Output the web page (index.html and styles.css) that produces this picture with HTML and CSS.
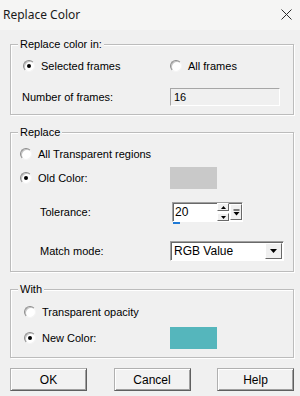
FILE: index.html
```html
<!DOCTYPE html>
<html lang="en">
<head>
    <meta charset="UTF-8">
    <meta name="viewport" content="width=device-width, initial-scale=1.0">
    <title>Replace Color</title>
    <link rel="stylesheet" href="styles.css">
</head>
<body>
    <div class="window">
        <div class="titlebar">
            <span class="title">Replace Color</span>
            <svg class="close" width="11" height="11" viewBox="0 0 11 11">
                <path d="M0.5 0.5 L10.5 10.5 M10.5 0.5 L0.5 10.5" stroke="#2b2b2b" stroke-width="1" fill="none"/>
            </svg>
        </div>

        <div class="dialog">
            <fieldset class="group group-in">
                <legend>Replace color in:</legend>
                <div class="row row-first">
                    <label class="option opt-selected"><span class="radio checked"></span>Selected frames</label>
                    <label class="option opt-all"><span class="radio"></span>All frames</label>
                </div>
                <div class="row row-count">
                    <span class="field-label label-count">Number of frames:</span>
                    <span class="readonly-box">16</span>
                </div>
            </fieldset>

            <fieldset class="group group-replace">
                <legend>Replace</legend>
                <div class="row row-first">
                    <label class="option opt-transparent"><span class="radio"></span>All Transparent regions</label>
                </div>
                <div class="row row-swatch">
                    <label class="option opt-old"><span class="radio checked"></span>Old Color:</label>
                    <span class="swatch swatch-old"></span>
                </div>
                <div class="row row-tolerance">
                    <span class="field-label label-sub">Tolerance:</span>
                    <div class="spin">
                        <span class="spin-value">20</span>
                        <div class="spin-arrows">
                            <span class="spin-btn"><svg width="5" height="3" viewBox="0 0 5 3"><path d="M2.5 0 L5 3 L0 3 Z" fill="#000"/></svg></span>
                            <span class="spin-btn"><svg width="5" height="3" viewBox="0 0 5 3"><path d="M0 0 L5 0 L2.5 3 Z" fill="#000"/></svg></span>
                        </div>
                        <span class="spin-drop"><svg width="7" height="7" viewBox="0 0 7 7"><path d="M0.5 1 H6.5" stroke="#000" stroke-width="1"/><path d="M0.5 3 L6.5 3 L3.5 6.5 Z" fill="#000"/></svg></span>
                        <span class="spin-mark"></span>
                    </div>
                </div>
                <div class="row row-match">
                    <span class="field-label label-sub">Match mode:</span>
                    <div class="combo">
                        <span class="combo-value">RGB Value</span>
                        <span class="combo-btn"><svg width="7" height="4" viewBox="0 0 7 4"><path d="M0 0 L7 0 L3.5 4 Z" fill="#000"/></svg></span>
                    </div>
                </div>
            </fieldset>

            <fieldset class="group group-with">
                <legend>With</legend>
                <div class="row row-first">
                    <label class="option opt-opacity"><span class="radio"></span>Transparent opacity</label>
                </div>
                <div class="row row-swatch">
                    <label class="option opt-new"><span class="radio checked"></span>New Color:</label>
                    <span class="swatch swatch-new"></span>
                </div>
            </fieldset>

            <div class="buttons">
                <button class="btn">OK</button>
                <button class="btn">Cancel</button>
                <button class="btn">Help</button>
            </div>
        </div>
    </div>
</body>
</html>
```

FILE: styles.css
```css
* {
    box-sizing: border-box;
}
body {
    margin: 0;
    background: #f0f0f0;
    font-family: 'Liberation Sans', Arial, sans-serif;
    font-size: 11px;
    color: #000;
}
.window {
    width: 300px;
    height: 396px;
    overflow: hidden;
}
.titlebar {
    height: 30px;
    background: #f5f5f4;
    display: flex;
    align-items: center;
    justify-content: space-between;
    padding: 0 8px 2px 3px;
    font-family: 'Noto Sans', sans-serif;
    font-size: 12px;
    color: #1a1a1a;
}
.dialog {
    padding: 7px 0 0 10px;
}
.group {
    width: 284px;
    margin: 0;
    padding: 0 0 7px;
    border: 1px solid #bcbcbc;
    box-shadow: inset 1px 1px 0 #fff, 1px 1px 0 #fff;
}
.group legend {
    margin-left: 7px;
    padding: 0 2px;
    line-height: 14px;
    background: #f0f0f0;
}
.group-replace,
.group-with {
    margin-top: 10px;
}
.group-replace {
    padding-bottom: 10px;
}
.group-with {
    padding-bottom: 8px;
}
.row {
    display: flex;
    align-items: center;
    height: 20px;
}
.row-first {
    margin-top: 5px;
}
.group-with .row-first {
    margin-top: 6px;
}
.row-count {
    margin-top: 11px;
    padding-left: 11px;
}
.row-swatch {
    height: 22px;
    margin-top: 3px;
}
.group-with .row-swatch {
    margin-top: 5px;
}
.row-tolerance {
    margin-top: 13px;
}
.row-match {
    margin-top: 19px;
}

/* radio options */
.option {
    display: flex;
    align-items: center;
}
.radio {
    position: relative;
    width: 12px;
    height: 12px;
    margin-right: 6px;
    border-radius: 50%;
    background: #fff;
    border: 1px solid;
    border-color: #8c8c8c #f4f4f4 #f4f4f4 #8c8c8c;
    box-shadow: inset 1px 1px 0 #c4c4c4;
}
.radio.checked::after {
    content: '';
    position: absolute;
    left: 3px;
    top: 3px;
    width: 4px;
    height: 4px;
    border-radius: 50%;
    background: #000;
}
.opt-selected {
    margin-left: 12px;
    width: 147px;
}
.group-replace .option {
    margin-left: 9px;
}
.opt-old {
    width: 150px;
}
.group-with .option {
    margin-left: 13px;
}
.opt-new {
    width: 146px;
}

/* labels and fields */
.label-count {
    width: 148px;
}
.label-sub {
    width: 132px;
    margin-left: 29px;
}
.row-match .label-sub {
    width: 130px;
}
.readonly-box {
    width: 110px;
    height: 18px;
    padding: 2px 3px;
    line-height: 13px;
    border: 1px solid;
    border-color: #a6a6a6 #fff #fff #a6a6a6;
    background: #f0f0f0;
}
.swatch {
    width: 47px;
    height: 22px;
}
.swatch-old {
    background: #c9c9c9;
}
.swatch-new {
    background: #55b6bc;
}

/* spin control */
.spin {
    position: relative;
    display: flex;
    align-items: center;
    width: 71px;
    height: 20px;
    background: #fff;
    border: 1px solid;
    border-color: #a0a0a0 #fff #fff #a0a0a0;
    box-shadow: inset 1px 1px 0 #696969;
}
.spin-value {
    flex: 1;
    padding-left: 2px;
    font-size: 12px;
}
.spin-arrows {
    display: flex;
    flex-direction: column;
    gap: 2px;
    margin-right: 1px;
}
.spin-btn,
.spin-drop,
.combo-btn {
    display: flex;
    align-items: center;
    justify-content: center;
    background: #f0f0f0;
    border: 1px solid;
    border-color: #fff #696969 #696969 #fff;
}
.spin-btn {
    width: 12px;
    height: 8px;
}
.spin-drop {
    width: 12px;
    height: 16px;
}
.spin-mark {
    position: absolute;
    left: 0;
    bottom: -3px;
    width: 7px;
    height: 2px;
    background: #1f7ad6;
}

/* combo box */
.combo {
    display: flex;
    align-items: center;
    width: 114px;
    height: 20px;
    background: #fff;
    border: 1px solid;
    border-color: #a0a0a0 #fff #fff #a0a0a0;
    box-shadow: inset 1px 1px 0 #696969;
    padding: 1px 1px 1px 3px;
}
.combo-value {
    flex: 1;
    font-size: 12px;
}
.combo-btn {
    width: 17px;
    height: 16px;
}

/* bottom buttons */
.buttons {
    display: flex;
    justify-content: space-between;
    width: 284px;
    margin-top: 10px;
}
.btn {
    width: 77px;
    height: 23px;
    padding: 0;
    font-family: 'Liberation Sans', Arial, sans-serif;
    font-size: 12px;
    color: #000;
    background: #f2f2f2;
    border: 1px solid;
    border-color: #b0b0b0 #5f5f5f #5f5f5f #b0b0b0;
    box-shadow: inset 1px 1px 0 #fff, inset -1px -1px 0 #a0a0a0;
}
```
